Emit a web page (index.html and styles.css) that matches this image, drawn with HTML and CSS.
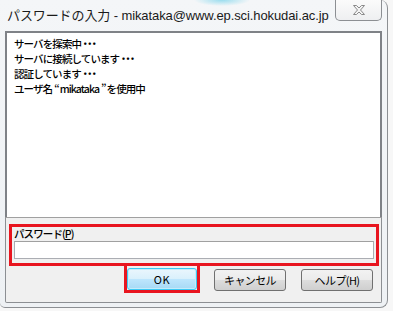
FILE: index.html
```html
<!DOCTYPE html>
<html lang="ja">
<head>
<meta charset="utf-8">
<title>パスワードの入力</title>
<link rel="stylesheet" href="styles.css">
</head>
<body>
<div class="window">
  <div class="titlebar">
    <div class="title">パスワードの入力 - mikataka@www.ep.sci.hokudai.ac.jp</div>
    <div class="close">
      <svg width="16" height="12" viewBox="0 0 16 12">
        <path d="M2.5 1.5 L5.5 1.5 L8 4 L10.5 1.5 L13.5 1.5 L9.5 6 L13.5 10.5 L10.5 10.5 L8 8 L5.5 10.5 L2.5 10.5 L6.5 6 Z" fill="#f4f4f4" stroke="#8a8a8a" stroke-width="1" stroke-linejoin="round"/>
      </svg>
    </div>
  </div>
  <div class="client">
    <div class="log">
      <div class="line">サーバを探索中<span class="dots">・・・</span></div>
      <div class="line">サーバに接続しています<span class="dots">・・・</span></div>
      <div class="line">認証しています<span class="dots">・・・</span></div>
      <div class="line">ユーザ名<span class="quote">“</span>mikataka<span class="quote">”</span>を使用中</div>
    </div>
    <div class="panel">
      <div class="field-box">
        <div class="label">パスワード(<u>P</u>)</div>
        <div class="input"></div>
      </div>
      <div class="buttons">
        <div class="ok-mark"><div class="btn btn-default">OK</div></div>
        <div class="btn btn-cancel">キャンセル</div>
        <div class="btn btn-help">ヘルプ(H)</div>
      </div>
    </div>
  </div>
</div>
</body>
</html>
```

FILE: styles.css
```css
html, body {
  margin: 0;
  padding: 0;
}
body {
  width: 393px;
  height: 311px;
  overflow: hidden;
  background: #f7f7f7;
  font-family: "Noto Sans CJK JP", "Noto Sans", sans-serif;
}
.window {
  width: 387px;
  height: 307px;
  background:
    radial-gradient(ellipse 28px 6px at 222px 0px, rgba(80, 200, 230, 0.55), rgba(80, 200, 230, 0) 100%),
    linear-gradient(#f4f6f8, #eef1f4);
  border-right: 1px solid #8c8f93;
  border-bottom: 1px solid #8c8f93;
  border-radius: 0 8px 8px 5px;
}
.titlebar {
  height: 31px;
  display: flex;
  align-items: flex-start;
}
.title {
  flex: 1;
  min-width: 0;
  padding-left: 7px;
  padding-top: 7px;
  font-family: "Liberation Sans", "Noto Sans CJK JP", sans-serif;
  font-size: 13px;
  line-height: 18px;
  color: #1a1a1a;
  white-space: nowrap;
  letter-spacing: -0.1px;
}
.close {
  flex: none;
  margin-right: 5px;
  width: 45px;
  height: 20px;
  border: 1px solid #8c8f93;
  border-top: none;
  border-radius: 0 0 5px 5px;
  background: linear-gradient(#fbfbfb, #eeeff1);
  display: flex;
  align-items: center;
  justify-content: center;
}
.close svg {
  display: block;
}
.client {
  margin-left: 5px;
  width: 377px;
}
.log {
  background: #fff;
  border: 2px solid #7f8287;
  border-bottom: none;
  padding: 3px 7px 1px;
  height: 180px;
}
.line {
  font-size: 10.5px;
  font-weight: 500;
  line-height: 15px;
  color: #000;
  letter-spacing: -0.9px;
  white-space: nowrap;
}
.dots {
  letter-spacing: -6px;
  margin-left: -1px;
}
.quote {
  letter-spacing: -2px;
  margin: 0 2px;
}
.panel {
  height: 86px;
  background: #f0f0f0;
  border: 1px solid #8c8f93;
  border-top: 1px solid #a0a0a0;
  border-radius: 0 0 2px 2px;
  padding: 6px 0 0 3px;
  box-sizing: border-box;
}
.field-box {
  width: 370px;
  height: 42px;
  border: 3px solid #e8151f;
  box-sizing: border-box;
  padding: 0 2px;
}
.label {
  height: 14px;
  font-size: 10.5px;
  font-weight: 500;
  line-height: 14px;
  color: #000;
  letter-spacing: -0.9px;
}
.label u {
  text-decoration-thickness: 1px;
  text-underline-offset: 1px;
}
.input {
  height: 18px;
  background: #fff;
  border: 1px solid #abadb3;
  border-top-color: #a0a0a0;
  box-sizing: border-box;
}
.buttons {
  display: flex;
  align-items: flex-start;
}
.ok-mark {
  margin-left: 115px;
  border: 3px solid #e8151f;
  border-top: none;
  padding-top: 2px;
  width: 70px;
}
.btn {
  height: 22px;
  box-sizing: border-box;
  border: 1px solid #707070;
  border-radius: 3px;
  background: linear-gradient(#f2f2f2 0%, #ebebeb 50%, #dddddd 50%, #cfcfcf 100%);
  font-size: 11px;
  line-height: 20px;
  text-align: center;
  color: #000;
  letter-spacing: -0.6px;
  white-space: nowrap;
}
.btn-default {
  width: 70px;
  border-color: #3cc7f2;
  background: linear-gradient(#eaf6fd 0%, #d9f0fc 50%, #bee6fd 50%, #a7d9f5 100%);
  box-shadow: inset 0 0 0 1px #c4ecfb;
  letter-spacing: 0.5px;
}
.btn-cancel {
  width: 72px;
  margin-left: 14px;
  margin-top: 3px;
}
.btn-help {
  width: 72px;
  margin-left: 15px;
  margin-top: 3px;
}
```
